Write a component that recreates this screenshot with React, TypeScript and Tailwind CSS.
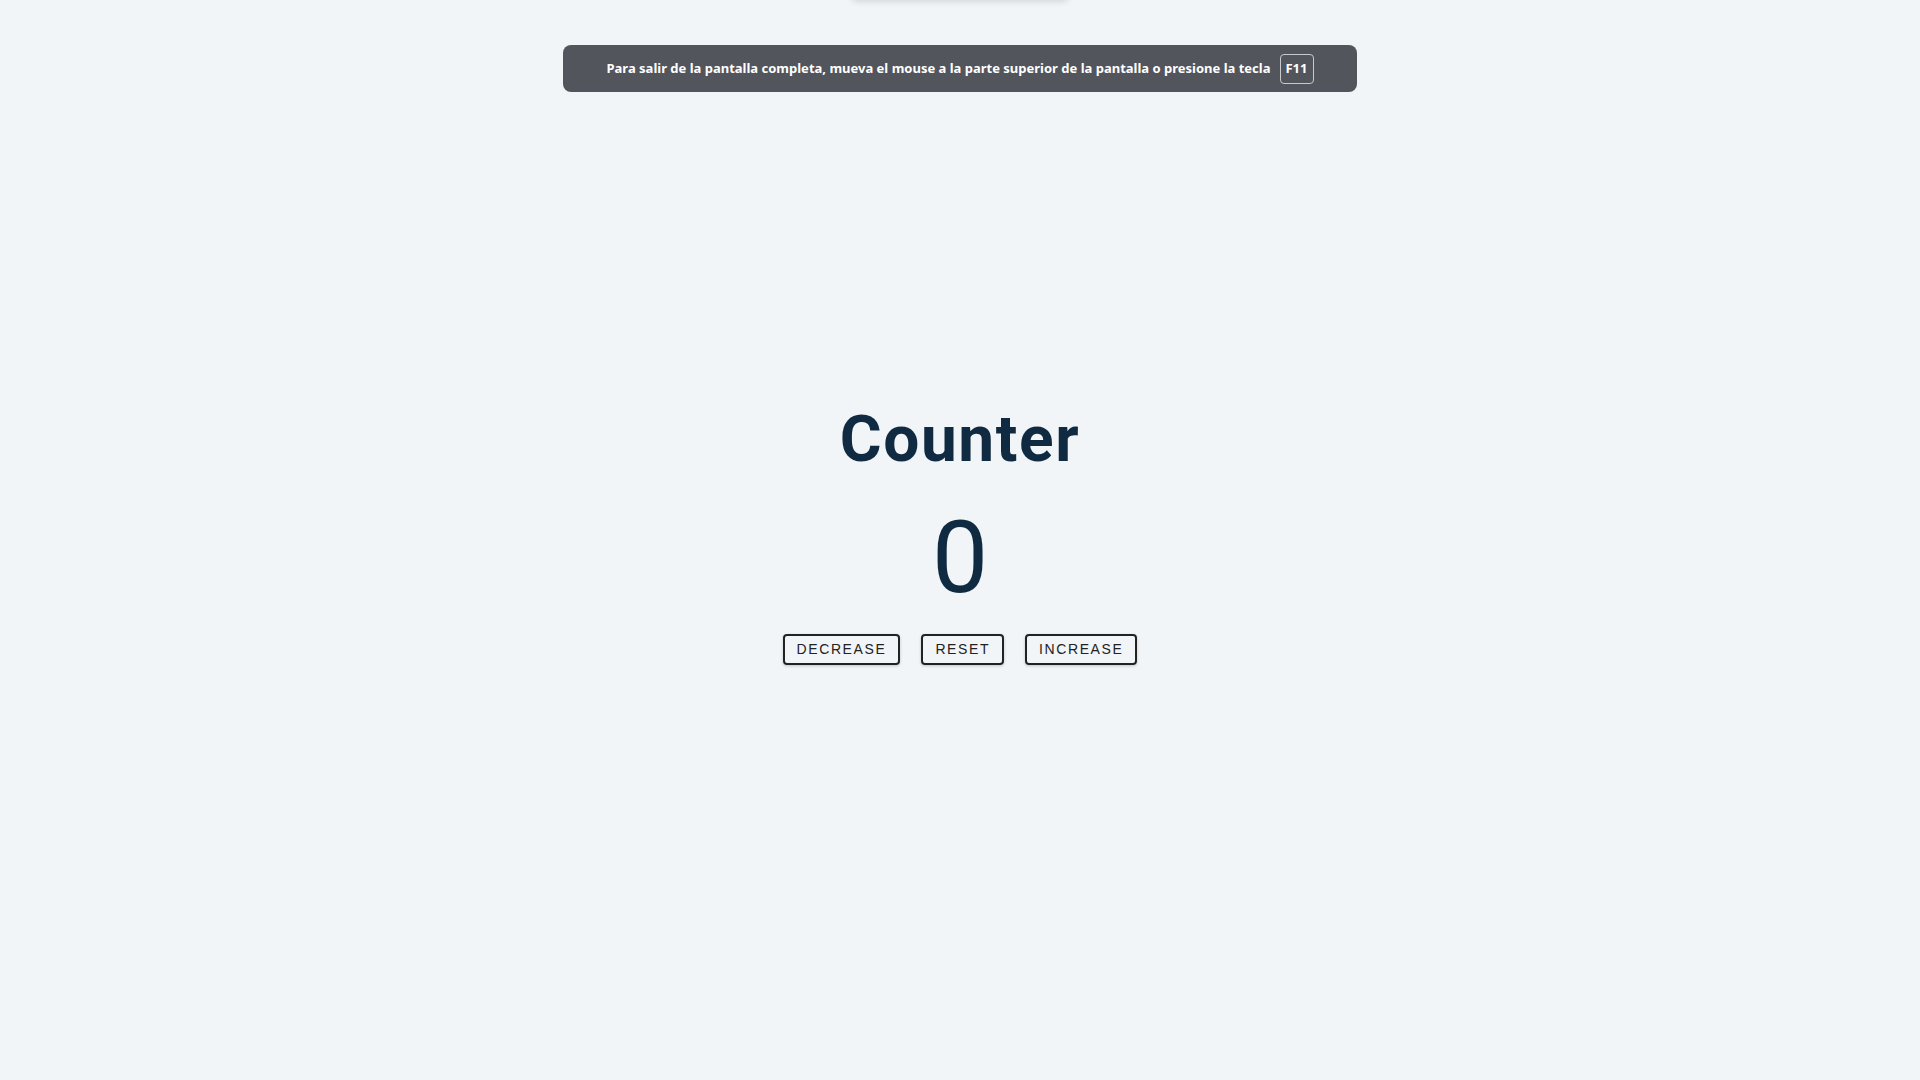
import React, { useState } from 'react';

const App: React.FC = () => {
  const [count, setCount] = useState(0);

  const btn =
    "px-3 py-[6px] border-2 border-[#222222] rounded-[4px] bg-transparent text-[14px] leading-[15px] tracking-[0.1rem] uppercase text-[#222222] shadow-[0_1px_3px_rgba(0,0,0,0.2)] cursor-pointer font-['Liberation_Sans',Arial,sans-serif]";

  return (
    <div className="relative min-h-screen bg-[#f1f5f8] overflow-hidden">
      {/* faint edge of the fullscreen drop-down at the top */}
      <div className="absolute -top-[12px] left-1/2 -translate-x-1/2 w-[220px] h-[12px] rounded-b-lg bg-[#f1f5f8] shadow-[0_2px_6px_rgba(0,0,0,0.12)]" />

      {/* fullscreen notice */}
      <div className="absolute top-[45px] left-1/2 -translate-x-1/2 w-[794px] h-[47px] rounded-[8px] bg-[#52555c] flex items-center justify-center gap-[9px] font-['Noto_Sans',sans-serif] text-white font-bold text-[13px]">
        <span>
          Para salir de la pantalla completa, mueva el mouse a la parte superior de la pantalla o presione la tecla
        </span>
        <span className="w-[34px] h-[30px] flex items-center justify-center border border-[#c8c9cc] rounded-[4px]">
          F11
        </span>
      </div>

      <main className="min-h-screen flex items-center justify-center pb-[15px]">
        <section className="flex flex-col items-center text-[#102a42] font-['Roboto',sans-serif]">
          <h1 className="text-[64px] leading-[80px] font-bold tracking-[0.1rem]">Counter</h1>
          <span className="mt-[28px] text-[100px] leading-[100px] font-normal">{count}</span>
          <div className="mt-[26px] flex gap-[21px]">
            <button className={btn} onClick={() => setCount(count - 1)}>
              decrease
            </button>
            <button className={btn} onClick={() => setCount(0)}>
              reset
            </button>
            <button className={btn} onClick={() => setCount(count + 1)}>
              increase
            </button>
          </div>
        </section>
      </main>
    </div>
  );
};

export default App;
